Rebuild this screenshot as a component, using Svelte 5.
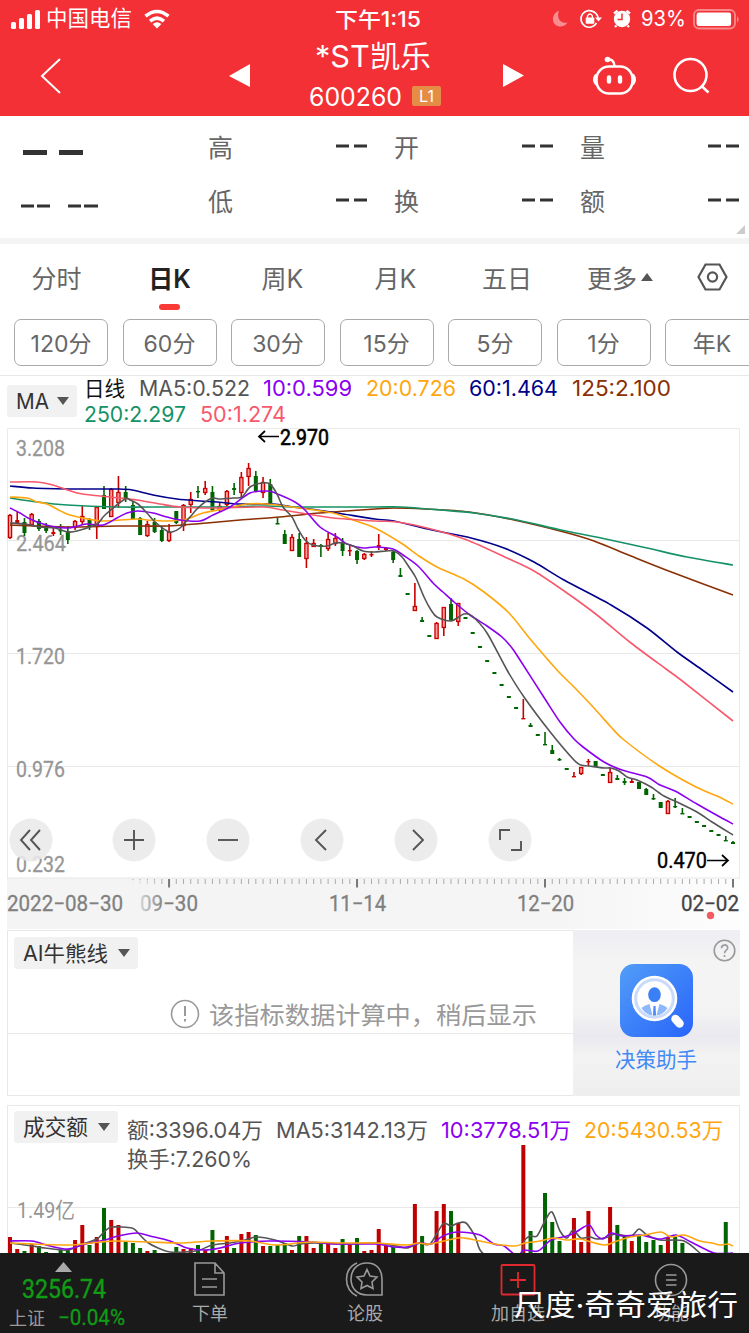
<script>
  const STEP = 7.23; // distance between two trading days
  const FIRST_X = 10;

  const quotes = ['高', '开', '量', '低', '换', '额'];
  const tabs = ['分时', '日K', '周K', '月K', '五日', '更多'];
  const periods = ['120分', '60分', '30分', '15分', '5分', '1分', '年K'];

  const maLegend = [
    ['日线', '#111', 42],
    ['MA5:0.522', '#555', 112],
    ['10:0.599', '#8b00f0', 90],
    ['20:0.726', '#ffa60f', 91],
    ['60:1.464', '#00008b', 90],
    ['125:2.100', '#8b2f04', 100],
    ['250:2.297', '#149266', 103],
    ['50:1.274', '#f8586c', 87]
  ];

  const volLegend = [
    ['额:3396.04万', '#555', 137],
    ['MA5:3142.13万', '#555', 153],
    ['10:3778.51万', '#8b00f0', 131],
    ['20:5430.53万', '#ffa60f', 140],
    ['换手:7.260%', '#555', 126]
  ];

  // colour, high, low, body top, body bottom
  const candles = [
    ['r', 514, 539, 515, 538], ['r', 511, 524, 520, 523], ['g', 518, 536, 522, 533], ['r', 513, 526, 514, 525],
    ['g', 519, 531, 521, 529], ['g', 523, 533, 526, 531], ['r', 528, 536, 532, 534], ['g', 524, 535, 530, 531],
    ['g', 526, 544, 531, 540], ['r', 520, 530, 521, 528], ['r', 506, 525, 516, 522], ['g', 518, 530, 519, 526],
    ['r', 506, 539, 507, 527], ['g', 486, 509, 495, 509], ['r', 488, 517, 489, 517], ['r', 476, 508, 492, 503],
    ['g', 486, 502, 492, 498], ['g', 501, 519, 505, 519], ['g', 517, 535, 518, 535], ['r', 521, 537, 524, 536],
    ['g', 518, 533, 522, 532], ['g', 526, 542, 530, 541], ['r', 524, 542, 532, 541], ['g', 511, 524, 511, 523],
    ['r', 504, 531, 505, 526], ['r', 492, 513, 499, 505], ['g', 486, 498, 491, 492], ['r', 481, 495, 488, 493],
    ['g', 486, 511, 492, 510], ['r', 503, 512, 506, 510], ['r', 490, 506, 491, 505], ['g', 483, 495, 488, 490],
    ['r', 472, 498, 477, 493], ['r', 463, 486, 468, 477], ['g', 471, 492, 476, 491], ['r', 477, 498, 482, 493],
    ['g', 479, 504, 484, 503], ['g', 518, 524, 523, 524.5], ['g', 530, 544, 534, 544], ['r', 534, 551, 537, 551],
    ['g', 533, 557, 539, 557], ['r', 537, 568, 543, 559], ['r', 539, 547, 543, 547], ['g', 544, 557, 545, 547],
    ['r', 533, 551, 539, 549], ['r', 533, 546, 538, 544], ['g', 538, 556, 542, 551], ['r', 545, 556, 550, 551],
    ['g', 550, 564, 551, 560], ['r', 553, 560, 554, 559], ['r', 551, 557, 554, 555], ['r', 534, 550, 545, 547],
    ['r', 547, 551, 548, 550], ['g', 551, 563, 552, 560], ['g', 568, 577, 575, 577], ['g', 593, 595, 593, 595],
    ['r', 583, 611, 606, 611], ['g', 617, 622, 620, 622], ['g', 635, 637, 635, 637], ['r', 622, 639, 623, 639],
    ['r', 607, 636, 607, 628], ['g', 598, 621, 604, 620], ['r', 603, 626, 603, 622], ['g', 617, 619, 617, 619],
    ['g', 632, 634, 632, 634], ['g', 646, 648, 646, 648], ['g', 660, 662, 660, 662], ['g', 672, 674, 672, 674],
    ['g', 684, 686, 684, 686], ['g', 696, 698, 696, 698], ['g', 707, 709, 707, 709], ['r', 699, 719, 718, 719],
    ['g', 723, 727, 725, 727], ['g', 734, 736, 734, 736], ['g', 732, 745, 744, 745], ['g', 745, 754, 750, 754],
    ['g', 758, 761, 759, 760], ['g', 768, 770, 768, 770], ['r', 772, 777, 776, 777], ['r', 767, 775, 767, 774],
    ['r', 759, 766, 761, 762], ['g', 761, 767, 761, 767], ['g', 774, 776, 774, 776], ['r', 768, 783, 772, 783],
    ['g', 775, 780, 778, 780], ['g', 778, 785, 781, 783], ['r', 779, 783, 781, 783], ['g', 782, 789, 782, 789],
    ['g', 788, 795, 789, 795], ['g', 794, 800, 798, 799], ['g', 802, 808, 802, 808], ['r', 800, 814, 801, 814],
    ['g', 798, 808, 806, 807], ['g', 808, 814, 813, 814], ['g', 816, 818, 816, 818], ['g', 821, 823, 821, 823],
    ['g', 825, 827, 825, 827], ['g', 830, 832, 830, 832], ['g', 834, 836, 834, 836], ['g', 836, 841, 840, 841],
    ['g', 841, 844, 842, 844]
  ];

  const maLines = [
    ['#8b2f04', '10,525 67,527 117,526 167,526 207,523 240,520 280,517 320,513 375,509 394,508 425,509 469,512 514,520 564,532 594,541 631,556 674,573 733,595'],
    ['#00008b', '10,486 33,488 77,489 100,489 117,489 132,490 153,495 177,499 200,501 217,502 240,504 273,504 293,507 317,510 343,514 375,519 394,521 432,530 471,538 504,548 534,562 564,580 611,605 647,628 677,652 701,669 733,692'],
    ['#149266', '10,498 37,502 67,505 117,507 167,507 217,507 267,506 300,507 375,507 401,507 441,510 474,513 517,520 561,530 601,538 647,548 687,557 733,565'],
    ['#ffa60f', '10,497 27,498 37,502 47,504 67,514 83,518 103,521 137,519 147,520 167,521 187,519 203,513 233,507 247,504 267,504 300,508 333,513 353,520 375,528 401,543 419,556 437,567 464,579 484,592 509,613 531,640 557,670 574,687 594,708 611,727 624,740 661,767 696,787 717,796 733,804'],
    ['#f8586c', '10,482 37,482 53,485 77,493 100,496 120,498 137,500 160,504 180,507 213,508 263,507 283,510 307,514 333,518 375,521 397,522 431,529 467,540 507,558 534,571 567,593 597,615 631,643 666,669 681,680 733,721'],
    ['#8b00f0', '10,508 20,513 28,518 40,523 55,527 68,528 78,526 87,524 103,525 117,518 127,513 138,511 153,513 167,517 180,520 200,521 213,515 230,507 250,493 267,491 275,493 295,502 305,510 320,527 337,537 347,544 363,548 375,547 393,549 403,555 418,566 434,584 443,592 454,602 470,615 487,626 502,637 512,648 520,660 545,699 560,722 574,739 583,747 604,762 622,770 647,777 660,785 675,791 697,804 720,817 733,824'],
    ['#555', '10,523 25,524 40,527 55,528 68,532 77,531 97,524 105,515 125,499 130,500 138,504 147,513 155,522 167,531 172,532 180,528 190,517 197,509 205,502 213,498 220,499 233,498 242,497 250,487 262,483 270,484 277,494 283,507 292,517 298,529 305,540 313,545 327,546 335,543 343,543 353,546 363,551 374,552 386,551 394,551 402,557 409,567 416,578 424,597 431,610 437,617 451,621 464,614 472,616 487,633 507,670 524,697 551,733 574,760 581,765 589,766 604,768 611,768 619,771 627,777 637,780 651,787 664,796 679,803 697,812 712,822 733,835']
  ];

  // top of each volume bar, 0 = below the visible area
  const volumes = [
    1237, 1249, 1251, 1244, 1246, 1252, 0, 1250, 1249, 1240, 1225, 1245, 1237, 1208, 1220, 1225, 1242, 1243, 1248, 1251,
    1250, 0, 0, 1247, 1249, 1248, 1245, 1250, 1230, 1250, 1236, 1248, 1234, 1232, 1235, 1246, 1246, 1245, 1243, 1250,
    1236, 1236, 1248, 1244, 1242, 1248, 1239, 1245, 1238, 1251, 1250, 1229, 1246, 1247, 0, 0, 1204, 1236, 0, 1211,
    1204, 1211, 1223, 0, 0, 0, 0, 0, 0, 0, 0, 1145, 1231, 0, 1193, 1222, 1241, 0, 1218, 1242,
    1211, 0, 0, 1207, 1225, 1235, 1241, 1236, 1242, 1240, 1245, 1237, 1237, 1243, 0, 0, 0, 0, 0, 1222, 0
  ];

  const volLines = [
    ['#555', '10,1243 32,1246 45,1248 68,1250 83,1244 97,1239 105,1231 112,1227 132,1228 138,1233 147,1242 158,1248 170,1252 185,1252 200,1250 212,1245 230,1243 245,1240 257,1237 275,1240 292,1246 300,1244 315,1243 345,1244 375,1243 397,1246 407,1248 420,1243 430,1244 443,1224 451,1226 458,1223 466,1223 475,1236 484,1254 520,1255 524,1241 530,1236 537,1236 545,1221 552,1212 560,1231 567,1238 573,1230 581,1238 590,1237 597,1239 608,1237 615,1234 631,1236 639,1229 647,1235 660,1240 684,1241 701,1254'],
    ['#8b00f0', '10,1241 32,1241 50,1246 68,1249 85,1244 105,1240 118,1236 137,1233 150,1236 170,1241 187,1248 205,1250 220,1248 240,1243 270,1241 310,1242 335,1244 375,1244 394,1247 407,1247 420,1243 431,1244 443,1236 458,1232 480,1235 494,1244 504,1246 514,1254 520,1254 524,1250 538,1251 551,1240 567,1236 576,1232 589,1225 596,1235 603,1239 611,1233 622,1236 640,1235 660,1239 676,1235 691,1242 714,1253 733,1253'],
    ['#ffa60f', '10,1243 68,1245 100,1242 117,1241 150,1242 180,1243 212,1241 250,1241 275,1245 310,1242 340,1243 375,1243 407,1245 418,1243 430,1244 458,1238 470,1239 495,1244 515,1246 525,1243 540,1241 553,1238 567,1240 580,1239 604,1245 617,1241 630,1237 645,1235 661,1232 671,1237 684,1235 700,1241 712,1243 720,1245 728,1244 733,1246']
  ];

  const ticks = Array.from({ length: 84 }, (_, k) => k + 17);
  const tools = [
    [31, 'M-1,-10 L-10,0 L-1,10 M9,-10 L0,0 L9,10'],
    [134, 'M-10,0 H10 M0,-10 V10'],
    [228, 'M-10,0 H10'],
    [322, 'M4,-10 L-6,0 L4,10'],
    [416, 'M-3,-10 L7,0 L-3,10'],
    [510, 'M-10,0 V-10 H0 M1,10 H11 V1']
  ];

  const xAt = (i) => FIRST_X + i * STEP;

  // rounded line through all points
  function smooth(str) {
    const p = str.split(' ').map((s) => s.split(',').map(Number));
    let d = `M${p[0]}`;
    for (let i = 0; i < p.length - 1; i++) {
      const a = p[i - 1] || p[i];
      const b = p[i];
      const c = p[i + 1];
      const e = p[i + 2] || c;
      d += `C${b[0] + (c[0] - a[0]) / 7},${b[1] + (c[1] - a[1]) / 7} ${c[0] - (e[0] - b[0]) / 7},${c[1] - (e[1] - b[1]) / 7} ${c}`;
    }
    return d;
  }
</script>

{#snippet fit(text, color, width, size)}
  <svg class="fit" {width} height="26">
    <text x="0" y="20" fill={color} font-size={size} textLength={width - 1} lengthAdjust="spacingAndGlyphs">{text}</text>
  </svg>
{/snippet}

<div class="page">
  <header>
    <div class="status">
      <div class="carrier">
        <svg width="30" height="19" fill="#fff">
          <rect x="0" y="12" width="5" height="7" rx="1.5" /><rect x="8" y="8" width="5" height="11" rx="1.5" />
          <rect x="16" y="4" width="5" height="15" rx="1.5" /><rect x="24" y="0" width="5" height="19" rx="1.5" />
        </svg>
        {@render fit('中国电信', '#fff', 87, 22)}
        <svg class="wifi" width="26" height="19" fill="none" stroke="#fff" stroke-width="3.6">
          <path d="M1.5 6.2Q13 -3.2 24.5 6.2M6 11.2Q13 5.2 20 11.2" /><path d="M8.6 14Q13 10.4 17.4 14L13 18.5Z" fill="#fff" stroke="none" />
        </svg>
      </div>
      <div class="time">{@render fit('下午1:15', '#fff', 87, 21)}</div>
      <div class="power">
        <svg width="80" height="24" fill="none" stroke="#fff">
          <path d="M8 3.5C2 6 0 13 4 17.5C8 21 14 20 16.5 15.5C10 17.5 5 11 8 3.5Z" fill="#f98c8e" stroke="none" />
          <path d="M43.5 5.5A8.3 8.3 0 1 0 45.5 16M40 3.9A8.3 8.3 0 0 1 47.2 12.5" stroke-width="1.7" />
          <path d="M44 10.5H51L47.5 14.5Z" fill="#fff" stroke="none" />
          <rect x="34.7" y="10.4" width="8.6" height="6.4" rx="1" fill="#fff" stroke="none" /><path d="M36.5 11V8.8Q39 5.3 41.4 8.8V11" stroke-width="1.4" />
          <circle cx="71" cy="12" r="8.2" fill="#fff" stroke="none" />
          <path d="M71 6.5V12.5H66.5" stroke="#f23035" stroke-width="1.5" /><path d="M63 6.5L66.5 3.7M75.5 3.7L79 6.5M65.5 18.5L64 20M76.5 18.5L78 20" stroke-width="2.3" />
        </svg>
        {@render fit('93%', '#fff', 46, 22)}
        <svg width="48" height="21">
          <rect x="1" y="1" width="41" height="18.5" rx="5" fill="none" stroke="#f8898b" stroke-width="1.8" />
          <rect x="3.6" y="3.5" width="34.5" height="13.6" rx="2.4" fill="#fff" /><path d="M44 7Q47.5 10.3 44 13.7Z" fill="#f8898b" />
        </svg>
      </div>
    </div>
    <div class="nav">
      <svg class="back" width="24" height="38" fill="none" stroke="#fff" stroke-width="2"><path d="M20 2L2 19L20 36" /></svg>
      <svg class="prev" width="22" height="24" fill="#fff"><path d="M0 12L21 0V23Z" /></svg>
      <div class="title">
        <svg width="116" height="38"><text x="0" y="29" fill="#fff" font-size="30" textLength="116" lengthAdjust="spacingAndGlyphs">*ST凯乐</text></svg>
        <div class="code">
          <svg width="94" height="32"><text x="0" y="26" fill="#fff" font-size="25" textLength="93" lengthAdjust="spacingAndGlyphs">600260</text></svg>
          <b>L1</b>
        </div>
      </div>
      <svg class="next" width="22" height="24" fill="#fff"><path d="M0 0L21 11.5L0 23Z" /></svg>
      <svg class="robot" width="43" height="40" fill="none" stroke="#fff" stroke-width="2.6">
        <rect x="3.5" y="10.5" width="36" height="27" rx="12.5" />
        <path d="M3.2 18.5Q-.5 23.5 3.2 28.5M39.8 18.5Q43.5 23.5 39.8 28.5" />
        <path d="M14 3.5Q21 2.5 21.5 10" /><circle cx="14.5" cy="3.5" r="2.8" fill="#fff" stroke="none" />
        <path d="M16 21.5V25.5M27 21.5V25.5" stroke-width="4.4" stroke-linecap="round" />
      </svg>
      <svg class="search" width="38" height="38" fill="none" stroke="#fff" stroke-width="2.6"><circle cx="17.5" cy="18" r="16" /><path d="M28 28.5L35.5 35.5" /></svg>
    </div>
  </header>

  <section class="quote">
    <div class="last">
      <svg width="85" height="100" stroke="#333">
        <path d="M2 36.5H26M38 36.5H62" stroke-width="5" /><path d="M0 90H13M16 90H29M47 90H60M63 90H77" stroke-width="3" />
      </svg>
    </div>
    <div class="cells">
      {#each quotes as q}
        <div class="cell"><span>{q}</span><svg width="31" height="4"><path d="M0 2H13M18 2H31" stroke="#333" stroke-width="3" /></svg></div>
      {/each}
    </div>
    <i class="corner"></i>
  </section>

  <nav class="tabs">
    {#each tabs as tab, i}
      <div class="tab" class:active={i === 1}>
        <span>{tab}</span>
        {#if i === 5}<svg width="12" height="8"><path d="M0 8L6 0L12 8Z" fill="#555" /></svg>{/if}
      </div>
    {/each}
    <svg class="gear" width="31" height="28" fill="none" stroke="#555" stroke-width="2.2"><path d="M8.5 1.5H22.5L29.5 14L22.5 26.5H8.5L1.5 14Z" /><circle cx="15.5" cy="14" r="4.6" /></svg>
  </nav>

  <div class="periods">
    {#each periods as p}<button>{p}</button>{/each}
  </div>

  <div class="ma-row">
    <div class="pick">{@render fit('MA', '#333', 34, 21)}<i class="caret"></i></div>
    <div class="legend">
      {#each maLegend as [text, color, w]}{@render fit(text, color, w, 21)}{/each}
    </div>
  </div>

  <section class="kline">
    <svg class="plot" width="749" height="502" viewBox="0 428 749 502">
      <defs>
        <linearGradient id="axisBg" x1="0" x2="1"><stop offset="0" stop-color="#f4f4f4" /><stop offset=".75" stop-color="#f5f5f5" /><stop offset="1" stop-color="#fdfdfd" /></linearGradient>
        <linearGradient id="fade" x1="0" x2="1"><stop offset="0" stop-color="#f4f4f4" /><stop offset="1" stop-color="#f4f4f4" stop-opacity="0" /></linearGradient>
      </defs>
      <path d="M7.5 878V428.5H739.5V878" fill="none" stroke="#eaeaea" />
      <path d="M7 540.5H739M7 653.5H739M7 766.5H739" stroke="#e8e8e8" />
      <rect x="7" y="878" width="733" height="51" fill="url(#axisBg)" />
      <path d="M7 878H740" stroke="#e7e7e7" />
      {#each ticks as t}
        {@const major = (t - 22) % 26 === 0}
        <line x1={xAt(t)} x2={xAt(t)} y1="879" y2={major ? 887.5 : 884} stroke={major ? '#777' : '#aaa'} stroke-width={major ? 2 : 1} />
      {/each}
      <g class="digits" font-size="22" fill="#808080" stroke="#808080" stroke-width=".3">
        <g fill="#969696" stroke="#969696">
          <text x="16" y="455.5" textLength="49" lengthAdjust="spacingAndGlyphs">3.208</text>
          <text x="16" y="550.5" textLength="50" lengthAdjust="spacingAndGlyphs">2.464</text>
          <text x="16" y="663.5" textLength="49" lengthAdjust="spacingAndGlyphs">1.720</text>
          <text x="16" y="776.5" textLength="49" lengthAdjust="spacingAndGlyphs">0.976</text>
          <text x="16" y="871.5" textLength="49" lengthAdjust="spacingAndGlyphs">0.232</text>
        </g>
        <text x="7" y="910.5" textLength="116" lengthAdjust="spacingAndGlyphs">2022−08−30</text>
        <text x="140" y="910.5" textLength="58" lengthAdjust="spacingAndGlyphs">09−30</text>
        <text x="329" y="910.5" textLength="57" lengthAdjust="spacingAndGlyphs">11−14</text>
        <text x="517" y="910.5" textLength="57" lengthAdjust="spacingAndGlyphs">12−20</text>
        <text x="681" y="910.5" textLength="58" fill="#444" stroke="#444" lengthAdjust="spacingAndGlyphs">02−02</text>
      </g>
      <rect x="130" y="880" width="35" height="36" fill="url(#fade)" />
      <circle cx="710.5" cy="915.5" r="3.7" fill="#f25b5f" />
      {#each candles as [c, hi, lo, top, bottom], i}
        {@const x = xAt(i)}
        <line x1={x} x2={x} y1={hi} y2={lo} stroke={c === 'r' ? '#c80000' : '#006400'} stroke-width="1.6" />
        {#if c === 'r' && bottom - top > 3}
          <rect x={x - 1.6} y={top + 0.5} width="3.2" height={bottom - top - 1} fill="#ff9c98" stroke="#c80000" stroke-width="1.3" />
        {:else}
          <rect x={x - 2} y={top} width="4" height={Math.max(bottom - top, 1.4)} fill={c === 'r' ? '#c80000' : '#006400'} />
        {/if}
      {/each}
      {#each maLines as [color, pts]}
        <path d={smooth(pts)} fill="none" stroke={color} stroke-width="1.6" />
      {/each}
      <g class="digits" font-size="21.5" fill="#000" stroke="#000">
        <path d="M279 436.5H259M265 431L259 436.5L265 442M707 860.5H728M722 855L728 860.5L722 866" fill="none" stroke-width="1.7" />
        <text x="280" y="444.5" stroke-width=".6" textLength="49" lengthAdjust="spacingAndGlyphs">2.970</text>
        <text x="657" y="868" stroke-width=".4" textLength="50" lengthAdjust="spacingAndGlyphs">0.470</text>
      </g>
      {#each tools as [x, d]}
        <g transform="translate({x} 840)">
          <circle r="21.5" fill="#e9e9e9" fill-opacity=".88" />
          <path {d} fill="none" stroke="#555" stroke-width="1.9" />
        </g>
      {/each}
    </svg>
  </section>

  <section class="ai">
    <div class="ai-main">
      <div class="pick wide">{@render fit('AI牛熊线', '#333', 86, 21)}<i class="caret"></i></div>
      <div class="notice">
        <svg width="30" height="30" fill="none" stroke="#999" stroke-width="1.6"><circle cx="15" cy="15" r="13.5" /><path d="M15 7V17M15 20V22.5" stroke-width="2" /></svg>
        <svg width="329" height="34"><text x="0" y="27" fill="#999" font-size="24" textLength="328" lengthAdjust="spacingAndGlyphs">该指标数据计算中，稍后显示</text></svg>
      </div>
    </div>
    <div class="helper">
      <svg class="app-icon" width="73" height="73">
        <defs><linearGradient id="blue" x1="0" y1="0" x2="1" y2="1"><stop offset="0" stop-color="#529df8" /><stop offset="1" stop-color="#2864fa" /></linearGradient></defs>
        <rect width="73" height="73" rx="14" fill="url(#blue)" />
        <path d="M55.5 55L59.5 59.5" stroke="#fff" stroke-width="8.5" stroke-linecap="round" />
        <circle cx="34.5" cy="34.5" r="22.8" fill="#fff" />
        <circle cx="34.5" cy="34.5" r="18.8" fill="#fff" stroke="#cadafa" stroke-width="3" />
        <path d="M21.5 44Q24 41.5 29.5 40L32.5 51.5Q25.5 50.500 21.5 44ZM47.5 44Q45 41.5 39.5 40L36.5 51.5Q43.500 50.500 47.500 44Z" fill="#8db8fb" />
        <path d="M33.5 42H35.500L36 51.5H33Z" fill="#4c88f8" />
        <ellipse cx="34.5" cy="30.700" rx="6.3" ry="7.400" fill="#3a7ff6" />
      </svg>
      {@render fit('决策助手', '#428af5', 83, 21)}
      <svg class="help" width="23" height="23" fill="none" stroke="#999" stroke-width="1.6"><circle cx="11.5" cy="11.5" r="10.3" /><path d="M8.5 9.3C8.5 4.8 14.8 4.9 14.7 9C14.6 11.2 11.5 11.2 11.5 14.3M11.5 16V18" /></svg>
    </div>
  </section>

  <section class="volume">
    <svg class="bars" width="749" height="148" viewBox="0 1105 749 148">
      <path d="M7.5 1253V1105.5H739.5V1253M7 1207.5H739" fill="none" stroke="#e8e8e8" />
      <text x="17" y="1218" fill="#969696" font-size="22" class="digits" textLength="58" lengthAdjust="spacingAndGlyphs">1.49亿</text>
      {#each volumes as top, i}
        {#if top}<rect x={xAt(i) - 2} y={top} width="4" height={1253 - top} fill={candles[i][0] === 'r' ? '#c00000' : '#006400'} />{/if}
      {/each}
      {#each volLines as [color, pts]}
        <path d={smooth(pts)} fill="none" stroke={color} stroke-width="1.6" />
      {/each}
    </svg>
    <div class="vol-head">
      <div class="pick">{@render fit('成交额', '#333', 66, 22)}<i class="caret"></i></div>
      <div class="legend">
        {#each volLegend as [text, color, w]}{@render fit(text, color, w, 22)}{/each}
      </div>
    </div>
  </section>

  <footer>
    <div class="index">
      <svg class="digits" width="150" height="80">
        <path d="M55 19L63.5 9L72 19Z" fill="#aaa" />
        <text x="22" y="45" font-size="25" fill="#109c15" stroke="#109c15" stroke-width=".4" textLength="84" lengthAdjust="spacingAndGlyphs">3256.74</text>
        <text x="9" y="72" font-size="18" fill="#999" textLength="36" lengthAdjust="spacingAndGlyphs">上证</text>
        <text x="58" y="72" font-size="22" fill="#109c15" stroke="#109c15" stroke-width=".3" textLength="67" lengthAdjust="spacingAndGlyphs">−0.04%</text>
      </svg>
    </div>
    <div class="item order">
      <svg width="36" height="36" fill="none" stroke="#999" stroke-width="1.6"><path d="M3 2H23L32 12V34H3ZM23 2V12H32M10 18H25M10 26H25" /></svg>
      <span>下单</span>
    </div>
    <div class="item talk">
      <svg width="38" height="36" fill="none" stroke="#999" stroke-width="1.6"><path d="M21 2C11 2 5 9 5 18S11 34 21 34H36V18C36 8 30 2 21 2ZM11 2C-3 8 -3 28 11 35" /><path d="M21 8.5L24 15L31 16L26 21L27 27.5L21 24.5L15 27.5L16 21L11 16L18 15Z" /></svg>
      <span>论股</span>
    </div>
    <div class="item add">
      <svg width="36" height="36" fill="none" stroke="#e0292e" stroke-width="1.8"><rect x="1.5" y="4" width="33" height="29.5" rx="1" /><path d="M10 19H26M18 11V27" /></svg>
      <span>加自选</span>
    </div>
    <div class="item more">
      <svg width="36" height="36" fill="none" stroke="#999" stroke-width="1.6"><circle cx="18" cy="19" r="15.5" /><path d="M13 14H23.5M13 19H23.5M13 24H23.5" /></svg>
      <span>功能</span>
    </div>
    <svg class="watermark" width="225" height="40"><text x="0" y="29" fill="#fff" font-size="29" textLength="224" lengthAdjust="spacingAndGlyphs">尺度·奇奇爱旅行</text></svg>
  </footer>
</div>

<style>
  :global(body) {
    margin: 0;
    background: #fff;
  }

  .page {
    width: 749px;
    height: 1333px;
    overflow: hidden;
    font-family: Inter, 'Noto Sans CJK SC', sans-serif;
    color: #555;
  }

  svg {
    display: block;
    flex: none;
    overflow: visible;
  }

  .bars {
    overflow: hidden;
  }

  .digits {
    font-family: Roboto, 'Noto Sans CJK SC', sans-serif;
  }

  header {
    height: 116px;
    background: #f23035;
  }

  .status {
    display: grid;
    grid-template-columns: 1fr 87px 1fr;
    height: 38px;
    align-items: center;
  }

  .carrier, .power {
    display: flex;
    align-items: center;
  }

  .carrier {
    padding-left: 11px;
    gap: 5px;
  }

  .time {
    padding: 1px 0 0 4px;
    font-weight: 500;
  }

  .wifi {
    margin-left: 6px;
  }

  .power {
    justify-content: flex-end;
    padding-right: 8px;
    gap: 6px;
  }

  .power svg:first-child {
    margin-right: 4px;
  }

  .nav {
    display: flex;
    height: 76px;
    align-items: center;
  }

  .back { margin-left: 40px; }
  .prev { margin-left: 165px; }
  .next { margin-left: 61px; }
  .robot { margin-left: 68px; }
  .search { margin-left: 37px; }

  .title {
    width: 133px;
    height: 76px;
    margin-left: 58px;
  }

  .title > svg {
    margin-left: 6px;
  }

  .code {
    display: flex;
    align-items: center;
    gap: 9px;
    height: 38px;
    padding-top: 1px;
  }

  .code b {
    width: 29px;
    height: 20px;
    line-height: 20px;
    text-align: center;
    font-size: 16px;
    font-weight: 400;
    color: #fff;
    background: #e58c46;
    border-radius: 2px;
  }

  .quote {
    display: flex;
    position: relative;
    height: 122px;
    border-bottom: 6px solid #f4f4f4;
  }

  .last {
    width: 187px;
    padding-left: 21px;
  }

  .cells {
    flex: 1;
    display: grid;
    grid-template-columns: 159px 159px 159px;
    column-gap: 27px;
    grid-template-rows: 54px 54px;
    padding-top: 3px;
  }

  .cell {
    display: flex;
    align-items: center;
    justify-content: space-between;
    font-size: 25px;
    color: #666;
  }

  .cell svg {
    margin-top: -1px;
  }

  .corner {
    position: absolute;
    right: 4px;
    bottom: 4px;
    border-left: 9px solid transparent;
    border-bottom: 9px solid #ccc;
  }

  .tabs {
    display: flex;
    height: 69px;
    align-items: center;
  }

  .tab {
    position: relative;
    display: flex;
    align-items: center;
    justify-content: center;
    gap: 4px;
    width: 113px;
    height: 69px;
    padding-bottom: 4px;
    box-sizing: border-box;
    font-size: 25px;
    color: #666;
  }

  .tab:nth-child(5) { width: 110px; }
  .tab:nth-child(6) { width: 116px; }

  .tab.active {
    font-weight: 600;
    color: #222;
  }

  .tab.active::after {
    content: '';
    position: absolute;
    left: 46px;
    bottom: 3px;
    width: 21px;
    height: 6px;
    border-radius: 3px;
    background: #fa3a36;
  }

  .gear {
    margin: 0 0 3px 19px;
  }

  .periods {
    display: flex;
    gap: 14.5px;
    height: 63px;
    padding: 6px 0 0 14px;
    box-sizing: border-box;
    border-bottom: 1px solid #e8e8e8;
    overflow: hidden;
  }

  .periods button {
    flex: none;
    width: 94px;
    height: 47px;
    padding: 0 0 2px;
    font: 23px Inter, 'Noto Sans CJK SC', sans-serif;
    color: #666;
    background: #fff;
    border: 1px solid #aaa;
    border-radius: 7px;
  }

  .ma-row {
    display: flex;
    height: 52px;
    padding-left: 7px;
    gap: 7px;
    box-sizing: border-box;
  }

  .ma-row .pick {
    margin-top: 9px;
    width: 53px;
  }

  .ma-row .legend {
    height: 52px;
  }

  .pick {
    flex: none;
    display: flex;
    align-items: center;
    justify-content: space-between;
    width: 87px;
    height: 32px;
    padding: 0 8px 0 9px;
    background: #f1f1f1;
    border-radius: 3px;
  }

  .pick svg {
    margin-top: 2px;
  }

  .caret {
    border: 6px solid transparent;
    border-top: 8px solid #555;
    border-bottom: 0;
  }

  .legend {
    display: flex;
    flex-wrap: wrap;
    align-content: flex-start;
    column-gap: 12.5px;
  }

  .kline {
    height: 502px;
  }

  .ai {
    display: flex;
    height: 166px;
    margin: 0 9px 8px 7px;
  }

  .ai-main {
    width: 566px;
    padding: 6px 0 0 6px;
    box-sizing: border-box;
    border: 1px solid #e8e8e8;
    border-right: 0;
    background: linear-gradient(#e8e8e8, #e8e8e8) 0 102px / 100% 1px no-repeat;
  }

  .pick.wide {
    width: 107px;
  }

  .notice {
    display: flex;
    align-items: center;
    gap: 9px;
    padding: 28px 0 0 156px;
  }

  .helper {
    flex: 1;
    position: relative;
    display: flex;
    flex-direction: column;
    align-items: center;
    padding-top: 34px;
    gap: 10px;
    background: linear-gradient(#eeeef3, #f4f4f4 20%, #f3f3f4 50%, #e9e9ef 64%, #f3f3f3 76%, #eee);
  }

  .help {
    position: absolute;
    top: 9px;
    right: 4px;
  }

  .volume {
    position: relative;
    height: 149px;
  }

  .bars {
    position: absolute;
    top: 1px;
    left: 0;
  }

  .vol-head {
    position: relative;
    display: flex;
    gap: 9px;
    padding: 7px 0 0 14px;
  }

  .vol-head .legend {
    width: 610px;
    margin-top: 7px;
    column-gap: 12px;
    row-gap: 3px;
  }

  footer {
    position: relative;
    display: flex;
    height: 80px;
    background: #1a1a1a;
  }

  .index {
    width: 150px;
  }

  .item {
    display: flex;
    flex-direction: column;
    align-items: center;
    width: 120px;
    padding-top: 8px;
    font-size: 18px;
    line-height: 34px;
    color: #aaa;
  }

  .talk { margin-left: 35px; }
  .add { margin-left: 33px; }
  .more { margin-left: 33px; }

  .watermark {
    position: absolute;
    right: 10px;
    top: 34px;
  }
</style>
